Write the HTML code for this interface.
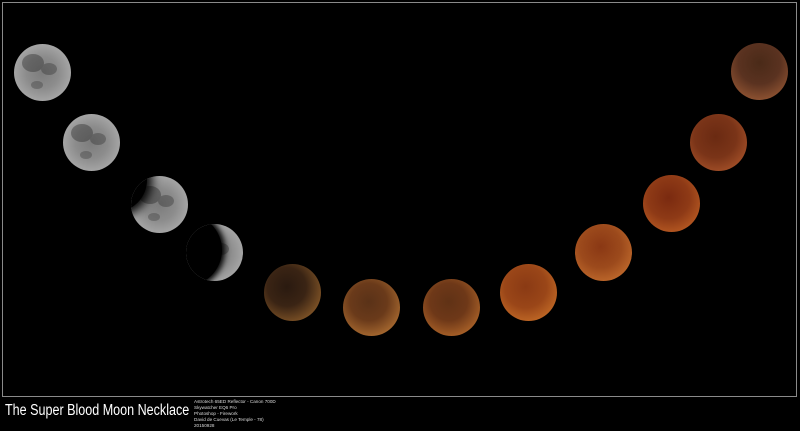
<!DOCTYPE html>
<html><head><meta charset="utf-8"><style>
html,body{margin:0;padding:0;background:#000;width:800px;height:431px;overflow:hidden}
.frame{position:absolute;left:2px;top:2px;width:793px;height:393px;border:1px solid #8a8a8a}
.m{position:absolute;width:57px;height:57px;border-radius:50%;overflow:hidden}
.g{background:radial-gradient(circle at 50% 50%,#7c7c7c 0,#8c8c8c 40%,#a8a8a8 75%,#d8d8d8 96%,#666 100%)}
.g::before{content:"";position:absolute;left:8px;top:10px;width:22px;height:18px;border-radius:50%;background:rgba(40,40,40,.4);box-shadow:16px 6px 0 -3px rgba(40,40,40,.35),4px 22px 0 -5px rgba(40,40,40,.3)}
.sh{position:absolute;border-radius:50%;background:#000}
.t{font-family:"Liberation Sans",sans-serif;color:#fff;position:absolute}
</style></head><body>
<div class="frame"></div>

<div class="m g" style="left:14px;top:44px"></div>
<div class="m g" style="left:63px;top:114px"></div>
<div class="m g" style="left:131px;top:176px"><div class="sh" style="left:-48px;top:-28px;width:64px;height:64px;box-shadow:0 0 10px 5px #000"></div></div>
<div class="m g" style="left:186px;top:224px"><div class="sh" style="left:-36px;top:-10px;width:72px;height:72px;box-shadow:0 0 6px 3px #000"></div></div>

<div class="m" style="left:264px;top:264px;background:radial-gradient(circle at 40% 40%,#2a1a10 0,#3a2414 40%,#7a5025 75%,#b07a3a 92%,#c8a0c0 100%)"></div>
<div class="m" style="left:343px;top:279px;background:radial-gradient(circle at 45% 40%,#5a3218 0,#6a3a1a 40%,#a86a30 78%,#e0a050 95%,#a090c0 100%)"></div>
<div class="m" style="left:423px;top:279px;background:radial-gradient(circle at 45% 40%,#603216 0,#6e3818 40%,#aa6228 78%,#e09040 96%,#806080 100%)"></div>
<div class="m" style="left:500px;top:264px;background:radial-gradient(circle at 45% 40%,#8a3a14 0,#9a4618 45%,#c26a26 80%,#e08a3a 96%,#703020 100%)"></div>
<div class="m" style="left:575px;top:224px;background:radial-gradient(circle at 45% 40%,#8a3814 0,#9c4a1c 45%,#c06a2c 80%,#e09050 96%,#804020 100%)"></div>
<div class="m" style="left:643px;top:175px;background:radial-gradient(circle at 45% 40%,#7a2a10 0,#8e3a16 45%,#b85a22 80%,#e08040 96%,#703020 100%)"></div>
<div class="m" style="left:690px;top:114px;background:radial-gradient(circle at 45% 40%,#6a2a12 0,#7a3418 45%,#a45028 80%,#d8906a 95%,#c0a0c0 100%)"></div>
<div class="m" style="left:731px;top:43px;background:radial-gradient(circle at 50% 35%,#4a2a18 0,#5a3220 45%,#8a5030 78%,#c0a0a8 92%,#e8e8f0 100%)"></div>

<div class="t" style="left:5px;top:402px;font-size:15.5px;white-space:nowrap;transform:scaleX(0.81);transform-origin:0 0">The Super Blood Moon Necklace</div>
<div class="t" style="left:194px;top:399px;font-size:4.6px;line-height:6px;color:#ddd;white-space:nowrap">Astrotech 65ED Reflector - Canon 700D<br>Skywatcher EQ6 Pro<br>Photoshop - Firework<br>David de Cuevas (Le Temple - 78)<br>20150928</div>
</body></html>
